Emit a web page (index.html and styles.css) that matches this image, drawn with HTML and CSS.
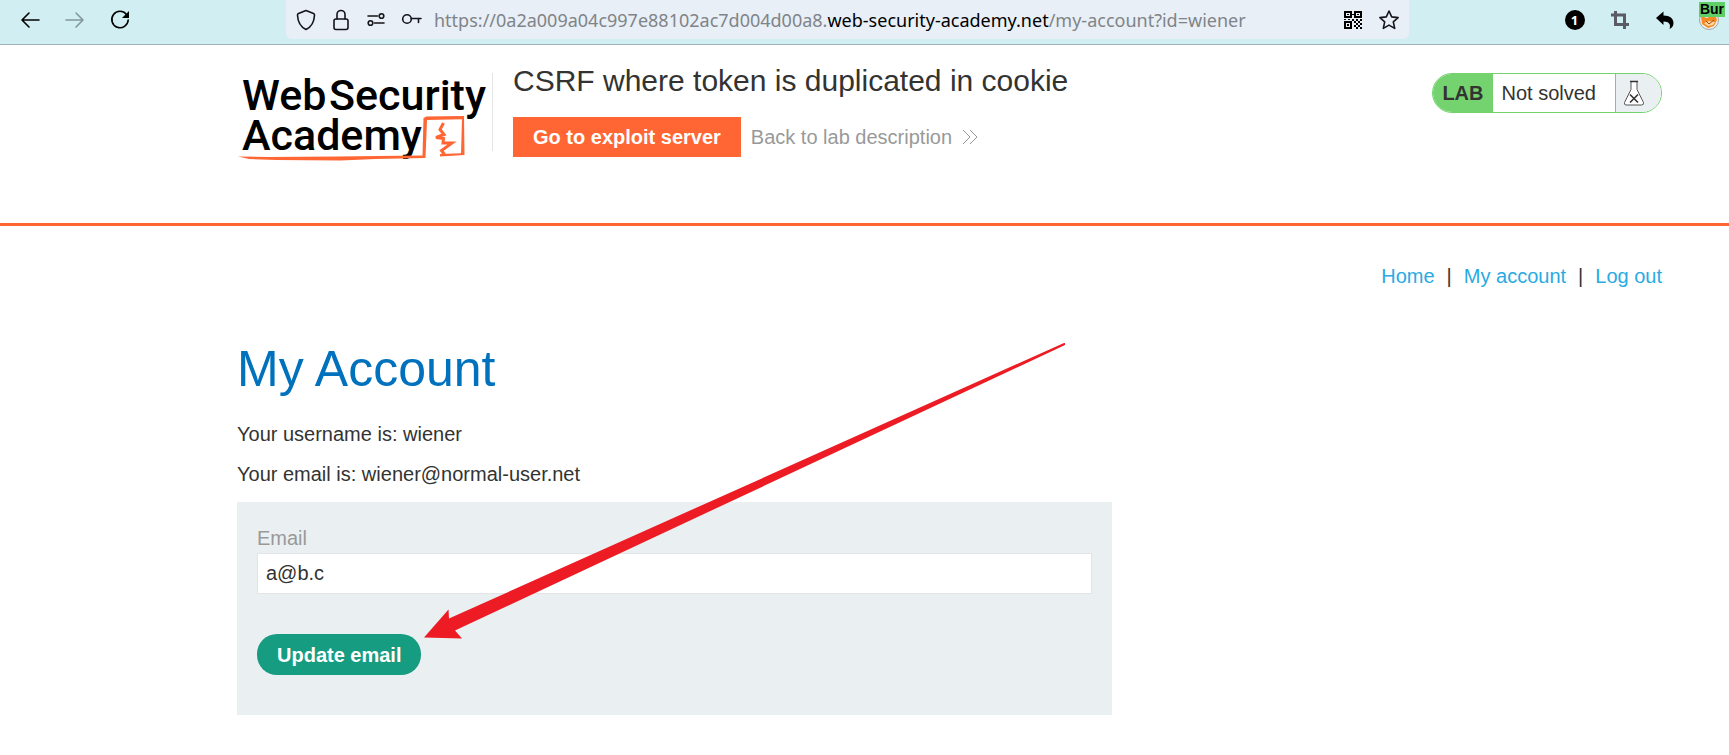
FILE: index.html
```html
<!DOCTYPE html>
<html lang="en">
<head>
<meta charset="utf-8">
<title>CSRF where token is duplicated in cookie</title>
<link rel="stylesheet" href="styles.css">
</head>
<body>
<div class="toolbar">
  <div class="tool-group">
    <button class="tool" aria-label="Back"><svg width="20" height="20" viewBox="0 0 20 20"><path class="line" d="M19 10H2M9 3L2 10l7 7"/></svg></button>
    <button class="tool disabled" aria-label="Forward"><svg width="20" height="20" viewBox="0 0 20 20"><path class="line" d="M1 10h17M11 3l7 7-7 7"/></svg></button>
    <button class="tool" aria-label="Reload"><svg width="20" height="20" viewBox="0 0 20 20"><path class="line" d="M16.500 4.500A8.200 8.200 0 1 0 18.200 10"/><path d="M19 1v7h-7z"/></svg></button>
  </div>
  <div class="address">
    <svg width="20" height="22" viewBox="0 0 20 22"><path class="line" d="M10 1.500L17.500 4.500Q18.600 5 18.500 6.200C18.200 13 15 18 10 20.500C5 18 1.800 13 1.500 6.200Q1.400 5 2.500 4.500Z"/></svg>
    <svg width="20" height="22" viewBox="-1 0 20 22"><rect class="line" x="2" y="10" width="14" height="10.500" rx="2"/><path class="line" d="M5 10V5.500a4 4 0 0 1 8 0V10"/></svg>
    <svg width="20" height="20" viewBox="0 0 20 20"><path class="line" d="M2 6h9.500M8.500 13H18"/><circle class="line" cx="15.500" cy="6" r="2.300"/><circle class="line" cx="4.500" cy="13" r="2.300"/></svg>
    <svg width="22" height="20" viewBox="0 0 22 20"><circle class="line" cx="6" cy="9" r="4.300"/><path class="line" d="M10.300 8.500H20M17.500 8.500v4"/></svg>
    <p class="url">https://0a2a009a04c997e88102ac7d004d00a8.<span class="host">web-security-academy.net</span>/my-account?id=wiener</p>
    <svg width="20" height="20" viewBox="0 0 20 20"><path fill-rule="evenodd" d="M1 1h8v7H1zM3 3v3h4V3zM11 1h8v7h-8zM13 3v3h4V3zM1 11h8v8H1zM3 13v4h4v-4z"/><path d="M4 4h2v1H4zM14 4h2v1h-2zM4 14h2v2H4zM9 4h2v1H9zM1 9h2v1H1zM5 9h2v1H5zM9 9h2v2H9zM13 9h2v2h-2zM17 9h2v2h-2zM11 11h2v2h-2zM15 11h2v2h-2zM13 13h2v2h-2zM17 13h2v2h-2zM11 15h2v2h-2zM15 15h2v2h-2zM13 17h2v2h-2zM17 17h2v2h-2z"/></svg>
    <svg width="22" height="22" viewBox="0 0 22 22"><path class="line" d="M11 2l2.700 5.900 6.400.7-4.800 4.300 1.400 6.500L11 16.100l-5.700 3.300 1.400-6.500L1.900 8.600l6.400-.7z"/></svg>
  </div>
  <div class="tool-group extensions">
    <button class="tool" aria-label="One notification"><span class="count">1</span></button>
    <button class="tool muted" aria-label="Capture"><svg width="20" height="20" viewBox="0 0 20 20"><path class="thick" d="M1 5h13.500V19M5.500 1v13.500H19"/></svg></button>
    <button class="tool" aria-label="Undo"><svg width="20" height="20" viewBox="0 0 20 20"><path d="M1 8L8.500 1.500V5.500C15 5.500 18.500 8.500 18.500 13C18.500 16 17 18 14.500 19C16 15 14.500 11.500 8.500 11.500V15Z"/></svg></button>
    <button class="tool proxy" aria-label="Proxy profile"><svg width="22" height="22" viewBox="0 0 22 22"><circle cx="11" cy="11" r="9.500" fill="#eef0ee" stroke="#a5a5a0"/><path fill="#f58a23" d="M3 7l6 2 8-4 2 6-3 6-6 2-6-4z"/><path d="M6 14l5-2 6 1-2 3-5 1z" fill="#ffd7a0"/><path d="M8 12l3 3 5-4" fill="none" stroke="#9c4a16"/></svg><span class="profile">Bur</span></button>
  </div>
</div>

<header class="lab-header">
  <a class="logo" href="#" aria-label="Web Security Academy">
    <svg width="255" height="86" viewBox="0 0 255 86">
      <g class="logo-text"><text x="5" y="37">Web</text><text x="92" y="37">Security</text><text x="5" y="77">Academy</text></g>
      <path fill="#ff6633" d="M1 83.500L30 84 100 83.600 185.500 82.500 186.500 45l3-1.500L227 43 227.500 82 203 83.500v-2.500l21-.800 1-34L190 47l-1.500 38-50 1-35 1.500L40 87 12 86z"/>
      <path class="bolt" d="M206.500 50L203 56.500 207 61.500 199 64.500 206.500 65.500 206 70 215 70 204.500 77.500 207.500 81.500"/>
    </svg>
  </a>
  <div class="lab-title">
    <h2>CSRF where token is duplicated in cookie</h2>
    <div class="lab-links">
      <a class="exploit" href="#">Go to exploit server</a>
      <a class="back" href="#">Back to lab description <svg width="16" height="16" viewBox="0 0 16 16"><path d="M1 1l7 7-7 7M8 1l7 7-7 7"/></svg></a>
    </div>
  </div>
  <div class="status">
    <strong>LAB</strong>
    <span class="state">Not solved</span>
    <span class="flask"><svg width="22" height="26" viewBox="0 0 22 26"><path fill="#fff" stroke="#555" d="M8 1.500V9.500L1.500 22.500Q1 25 3 25H18.500Q21 25 20.500 22.500L14 9.500V1.500"/><path fill="none" stroke="#333" stroke-width="1.600" d="M7 1.500h8M7 14.500l8 8M15 14.500l-8 8"/></svg></span>
  </div>
</header>

<main class="page">
  <nav class="nav"><a href="#">Home</a><span>|</span><a href="#">My account</a><span>|</span><a href="#">Log out</a></nav>
  <h1>My Account</h1>
  <p>Your username is: wiener</p>
  <p>Your email is: wiener@normal-user.net</p>
  <form class="email-form">
    <label for="email">Email</label>
    <input id="email" type="text" value="a@b.c">
    <button type="button">Update email</button>
  </form>
  <svg class="pointer" width="644" height="300" viewBox="0 0 644 300"><path fill="#ed1c24" d="M0 295.500L24.500 267.500 25 276.500 640 1h1v2L31 288.500 38 296.500z"/></svg>
</main>
</body>
</html>
```
FILE: styles.css
```css
* { box-sizing: border-box; }

body {
  margin: 0;
  background: #fff;
  color: #333332;
  font: 20px/24px "Liberation Sans", Arial, sans-serif;
}

h1, h2, p { margin: 0; font-weight: 400; }
a { color: #29abe2; text-decoration: none; }
button { font: inherit; border: 0; cursor: pointer; }

/* Browser toolbar */
.toolbar {
  display: flex;
  height: 45px;
  padding-left: 7px;
  background: #d1eef3;
  border-bottom: 1px solid #9fb2b5;
}
.toolbar svg { display: block; flex: none; }
.line { fill: none; stroke: currentColor; stroke-width: 1.600; stroke-linejoin: round; stroke-linecap: round; }
.thick { fill: none; stroke: currentColor; stroke-width: 3; }
.tool-group { display: flex; width: 279px; height: 39px; color: #000; }
.extensions { width: 320px; justify-content: flex-end; }
.tool {
  display: flex;
  align-items: center;
  justify-content: center;
  width: 45px;
  padding: 0;
  background: none;
  color: inherit;
}
.tool svg { fill: currentColor; }
.disabled { color: #84979b; }
.muted { color: #5b5b66; }
.count {
  width: 20px;
  height: 20px;
  border-radius: 50%;
  background: #000;
  color: #fff;
  font: bold 13px/20px "Open Sans", sans-serif;
}
.proxy { position: relative; width: 42px; padding-left: 2px; }
.profile {
  position: absolute;
  top: 2px;
  right: 4px;
  padding: 0 1px;
  background: #5fd068;
  color: #000;
  font: bold 14px/15px "Liberation Sans", sans-serif;
}
.address {
  display: flex;
  flex: 1;
  align-items: center;
  gap: 15px;
  min-width: 0;
  height: 39px;
  padding: 0 9px 0 10px;
  border-radius: 0 0 6px 6px;
  background: #e8eff6;
  color: #15141a;
}
.url {
  flex: 1;
  margin-left: -4px;
  overflow: hidden;
  color: #808488;
  font: 18px/26px "Noto Sans", sans-serif;
  white-space: nowrap;
}
.host { color: #000; }

/* Lab banner */
.lab-header {
  display: flex;
  align-items: flex-start;
  height: 181px;
  padding: 18px 67px 0 237px;
  border-bottom: 3px solid #ff6633;
}
.logo { flex: none; width: 256px; height: 78px; margin-top: 10px; border-right: 1px solid #e5e5e5; }
.logo svg { display: block; overflow: visible; }
.logo-text { font: 500 43px Roboto, sans-serif; fill: #000; }
.bolt { fill: none; stroke: #ff6633; stroke-width: 3; }
.lab-title { flex: 1; padding-left: 20px; }
h2 { font-size: 30px; line-height: 36px; }
.lab-links { display: flex; gap: 10px; margin-top: 18px; line-height: 40px; }
.exploit { padding: 0 20px; background: #ff6633; color: #fff; font-weight: 700; }
.back { display: flex; align-items: center; gap: 10px; color: #999; }
.back path { fill: none; stroke: #999; }
.status {
  display: flex;
  height: 40px;
  margin-top: 10px;
  overflow: hidden;
  border: 1px solid #74d36f;
  border-radius: 20px;
  line-height: 38px;
}
.status strong { padding: 0 9px; background: #74d36f; }
.state { padding: 0 19px 0 9px; }
.flask { display: flex; align-items: center; width: 46px; padding-left: 7px; border-left: 1px solid #74d36f; background: #eaeff2; }

/* Account page */
.page { position: relative; padding: 38px 67px 40px 237px; }
.nav { display: flex; justify-content: flex-end; gap: 12px; color: #333; }
h1 { margin: 53px 0 25px; color: #0071bc; font-size: 50px; line-height: 56px; }
.page p { margin-bottom: 16px; line-height: 24px; }
.email-form {
  display: flex;
  flex-direction: column;
  align-items: flex-start;
  width: 875px;
  max-width: 100%;
  padding: 24px 20px 40px;
  background: #eaeff2;
}
.email-form label { color: #999; }
.email-form input {
  width: 100%;
  height: 41px;
  margin: 3px 0 40px;
  padding: 0 8px;
  border: 1px solid #e2e4e6;
  background: #fff;
  color: #333332;
  font: inherit;
}
.email-form button {
  height: 41px;
  padding: 0 20px;
  border-radius: 20px;
  background: #169c80;
  color: #fff;
  font-weight: 700;
}
.pointer { position: absolute; left: 424px; top: 116px; pointer-events: none; }
```
